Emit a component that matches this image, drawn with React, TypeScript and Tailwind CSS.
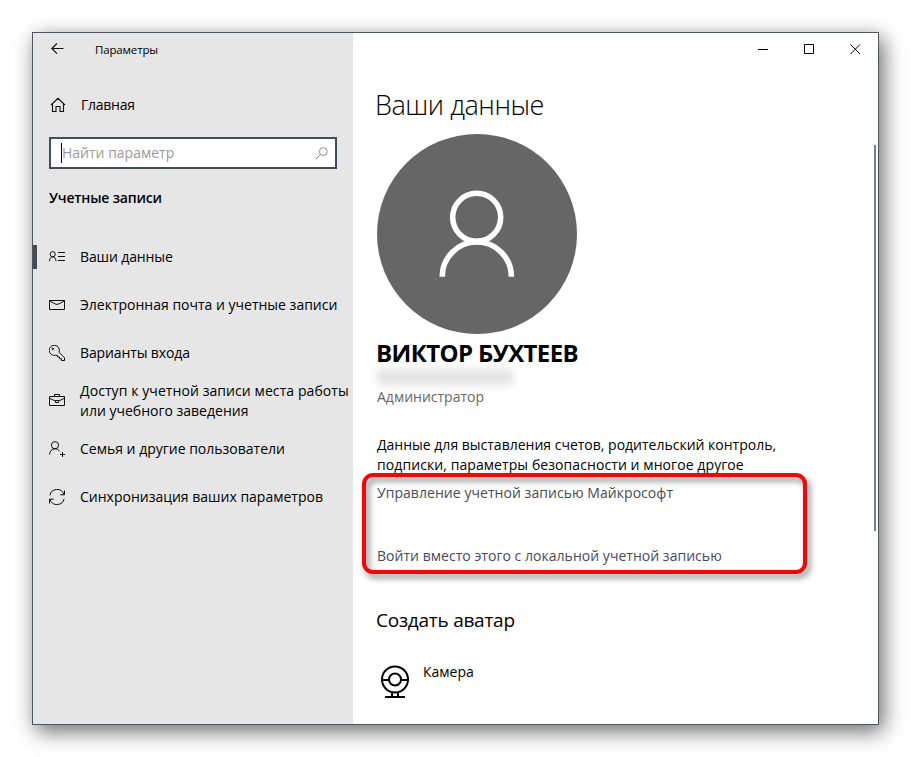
import type { ReactNode } from 'react';

type NavItem = {
  label: ReactNode;
  icon: ReactNode;
  active?: boolean;
};

function Icon({ children }: { children: ReactNode }) {
  return (
    <svg width="16" height="16" viewBox="0 0 16 16" fill="none" stroke="#111" strokeWidth="1" className="shrink-0">
      {children}
    </svg>
  );
}

const navItems: NavItem[] = [
  {
    label: <span className="tracking-[-0.12px]">Ваши данные</span>,
    active: true,
    icon: (
      <Icon>
        <circle cx="3.7" cy="5.2" r="2.6" />
        <path d="M0.5 12.2C0.5 9.6 1.8 7.8 3.7 7.8S7 9.6 7 12.2M9 3.5h7M9 7.5h7M9 11.5h7" />
      </Icon>
    ),
  },
  {
    label: 'Электронная почта и учетные записи',
    icon: (
      <Icon>
        <path d="M0.5 3.5h15v9h-15zM0.5 3.8L6 6.9q2 1 4 0l5.5-3.1" />
      </Icon>
    ),
  },
  {
    label: <span className="tracking-[-0.12px]">Варианты входа</span>,
    icon: (
      <Icon>
        <path d="M10 7.2A5.1 5.1 0 1 0 6.7 10.2l1.8.3v1.5h2v1.6h1.9v1.9h3.1v-2.7z" />
        <circle cx="3.8" cy="3.9" r="0.8" />
      </Icon>
    ),
  },
  {
    label: (
      <>
        <span className="tracking-[0.08px]">Доступ к учетной записи места работы</span>
        <br />
        <span>или учебного заведения</span>
      </>
    ),
    icon: (
      <Icon>
        <path d="M0.5 3.5h15v9h-15zM5.5 3.5v-2h5v2M0.5 5.3l6 2.7M15.5 5.3l-6 2.7M6.5 7.5h3v2h-3z" />
      </Icon>
    ),
  },
  {
    label: 'Семья и другие пользователи',
    icon: (
      <Icon>
        <circle cx="6" cy="4.2" r="3.6" />
        <path d="M0.5 13.5C0.8 10 3 7.8 6 7.8c2 0 3.6.9 4.6 2.5M13.5 11v5M11 13.5h5" />
      </Icon>
    ),
  },
  {
    label: 'Синхронизация ваших параметров',
    icon: (
      <Icon>
        <path d="M0.9 6.3A7.3 7.3 0 0 1 15 5.5M15.5 1.5v4.3h-4.3M15.1 9.7A7.3 7.3 0 0 1 1 10.5M0.5 14.5v-4.3h4.3" />
      </Icon>
    ),
  },
];

function Sidebar() {
  return (
    <aside className="flex w-80 shrink-0 flex-col bg-[#e6e6e6]">
      <div className="flex h-8 items-center pl-[18px]">
        <svg width="13" height="13" viewBox="0 0 13 13" fill="none" stroke="#111" strokeWidth="1.2">
          <path d="M6 0.3L0.8 5.5L6 10.7M0.8 5.5H12.5" />
        </svg>
        <span className="ml-[31px] pt-0.5 text-[11.5px] leading-8 tracking-[-0.15px]">Параметры</span>
      </div>

      <div className="mt-4 flex h-12 items-center pl-[17px]">
        <svg width="16" height="16" viewBox="0 0 16 16" fill="none" stroke="#111" strokeWidth="1.1">
          <path d="M1 8L8 1.3L15 8M2.5 6.8v7.7h3.5V9.5h4v5h3.5V6.8" />
        </svg>
        <span className="ml-[15px] text-sm leading-5 tracking-[-0.25px]">Главная</span>
      </div>

      <div className="mx-4 mt-2 flex h-8 items-center border-2 border-[#454b58] bg-white pl-2.5 pr-[7px]">
        <span className="h-5 w-px bg-black" />
        <span className="flex-1 pb-px text-sm leading-5 text-[#9a9a9a]">Найти параметр</span>
        <svg width="13" height="13" viewBox="0 0 13 13" fill="none" stroke="#8a8a8a" strokeWidth="1">
          <circle cx="8.3" cy="4.6" r="3.9" />
          <path d="M5.5 7.4L0.6 12.4" />
        </svg>
      </div>

      <h2 className="ml-4 mt-[19px] text-sm font-semibold leading-5 tracking-[-0.18px]">Учетные записи</h2>

      <nav className="mt-[25px]">
        {navItems.map((item, i) => (
          <div key={i} className="flex h-12 items-center">
            <span className={item.active ? 'h-6 w-1 shrink-0 bg-[#454b58]' : 'h-6 w-1 shrink-0'} />
            <span className="ml-3 shrink-0">{item.icon}</span>
            <span className="ml-[15px] whitespace-nowrap text-sm leading-5">{item.label}</span>
          </div>
        ))}
      </nav>
    </aside>
  );
}

function WindowButtons() {
  return (
    <div className="flex h-8 justify-end">
      <svg width="138" height="32" viewBox="0 0 138 32" fill="none" stroke="#000" strokeWidth="1">
        <path d="M18 16.5h10M64.5 11.5h9v9h-9zM110.5 11.5l9.5 9.5M120 11.5l-9.5 9.5" />
      </svg>
    </div>
  );
}

function Avatar() {
  return (
    <div className="size-[200px] rounded-full bg-[#666]">
      <svg width="200" height="200" viewBox="0 0 200 200" fill="none" stroke="#fff" strokeWidth="5.5">
        <circle cx="99.7" cy="83.3" r="24" />
        <path d="M65.2 142.7a34.6 34.6 0 0 1 69.2 0" />
      </svg>
    </div>
  );
}

export default function App() {
  return (
    <div className="h-[757px] w-[911px] overflow-hidden bg-white pl-8 pt-8 font-['Open_Sans','Noto_Sans',sans-serif] text-black">
      <div className="flex h-[693px] w-[847px] border border-[#50555f] bg-white shadow-[4px_6px_20px_rgba(0,0,0,0.6)]">
        <Sidebar />

        <main className="flex min-w-0 flex-1 flex-col">
          <WindowButtons />
          <div className="flex flex-1">
            <div className="flex-1 pl-6">
              <h1 className="-ml-0.5 mt-[22px] text-[27px] font-light leading-9 tracking-[-0.45px]">Ваши данные</h1>
              <div className="mt-[11px]">
                <Avatar />
              </div>
              <p className="-ml-px mt-[3px] text-2xl font-bold leading-8 tracking-[-0.6px]">ВИКТОР БУХТЕЕВ</p>
              <div className="h-4 w-[136px] rounded bg-[#e2e2e2] blur-[4px]" />
              <p className="mt-0.5 text-sm leading-5 text-[#666]">Администратор</p>

              <p className="mt-7 whitespace-nowrap text-sm leading-5">
                Данные для выставления счетов, родительский контроль,
                <br />
                <span className="tracking-[0.08px]">подписки, параметры безопасности и многое другое</span>
              </p>
              <div className="relative mt-2 text-sm leading-5 text-[#454b58]">
                <p className="tracking-[0.05px]">Управление учетной записью Майкрософт</p>
                <p className="mt-[43px] tracking-[0.03px]">Войти вместо этого с локальной учетной записью</p>
                <div className="absolute -left-[15px] -top-[10px] h-[101px] w-[445px] rounded-[11px] border-4 border-[#ee0808] drop-shadow-[3px_4px_3px_rgba(0,0,0,0.5)]" />
              </div>

              <h3 className="-ml-px mt-10 text-[19px] leading-7 tracking-[-0.25px]">Создать аватар</h3>
              <div className="mt-7 flex items-start">
                <svg width="36" height="36" viewBox="0 0 36 36" fill="none" stroke="#000" strokeWidth="2">
                  <circle cx="18" cy="17.5" r="13" />
                  <circle cx="18" cy="17.5" r="6" />
                  <path d="M5 18h7M24 18h7M15 30v4M21 30v4M8 35h20" />
                </svg>
                <span className="ml-2.5 text-sm leading-5">Камера</span>
              </div>
            </div>
            <div className="mr-[2px] mt-20 h-[386px] w-0.5 bg-[#7d7d7d]" />
          </div>
        </main>
      </div>
    </div>
  );
}
